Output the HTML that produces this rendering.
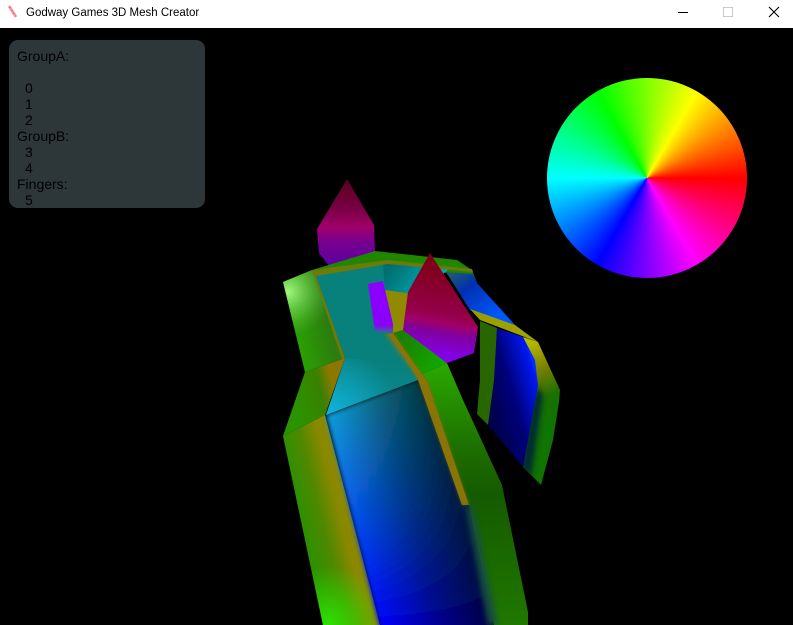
<!DOCTYPE html>
<html><head><meta charset="utf-8"><style>
html,body{margin:0;padding:0;background:#000;width:793px;height:625px;overflow:hidden}
#bar{position:absolute;left:0;top:0;width:793px;height:28px;background:#fff}
#title{position:absolute;left:26px;top:5px;font:11.5px/16px "Liberation Sans",sans-serif;color:#000;white-space:nowrap}
#wheel{position:absolute;left:547px;top:78px;width:200px;height:200px;border-radius:50%;background:conic-gradient(from 90deg,#f00,#f0f,#00f,#0ff,#0f0,#ff0,#f00)}
#panel{position:absolute;left:9px;top:40px;width:196px;height:168px;border-radius:9px;background:#2d3739;overflow:hidden;font:14px/16px "Liberation Sans",sans-serif;color:#000}
#panel div{position:absolute;white-space:nowrap}
svg{position:absolute;left:0;top:0}
</style></head><body>
<svg width="793" height="625" viewBox="0 0 793 625">
<defs>
<filter id="soft" x="-10%" y="-10%" width="120%" height="120%"><feGaussianBlur stdDeviation="2.5"/></filter>
<filter id="soft2" x="-30%" y="-10%" width="160%" height="120%"><feGaussianBlur stdDeviation="3"/></filter>
<filter id="soft3" x="-20%" y="-20%" width="140%" height="140%"><feGaussianBlur stdDeviation="1.5"/></filter>
<linearGradient id="cone1" gradientUnits="userSpaceOnUse" x1="347" y1="180" x2="347" y2="265"><stop offset="0" stop-color="#5a0020"/><stop offset=".3" stop-color="#740040"/><stop offset=".55" stop-color="#a00068"/><stop offset=".72" stop-color="#7a0090"/><stop offset="1" stop-color="#5a00a0"/></linearGradient>
<linearGradient id="cone2" gradientUnits="userSpaceOnUse" x1="440" y1="270" x2="425" y2="355"><stop offset="0" stop-color="#80001c"/><stop offset=".5" stop-color="#95004a"/><stop offset=".6" stop-color="#a00068"/><stop offset=".72" stop-color="#8000a0"/><stop offset="1" stop-color="#8400f0"/></linearGradient>
<linearGradient id="arm" gradientUnits="userSpaceOnUse" x1="287" y1="330" x2="345" y2="316"><stop offset="0" stop-color="#2aa800"/><stop offset=".7" stop-color="#2c7c10"/><stop offset="1" stop-color="#4a7a10"/></linearGradient>
<radialGradient id="armHi" gradientUnits="userSpaceOnUse" cx="288" cy="292" r="44"><stop offset="0" stop-color="#a0f880"/><stop offset="1" stop-color="#60c040" stop-opacity="0"/></radialGradient>
<linearGradient id="mid" gradientUnits="userSpaceOnUse" x1="295" y1="405" x2="335" y2="395"><stop offset="0" stop-color="#2a9400"/><stop offset=".7" stop-color="#3a8000"/><stop offset="1" stop-color="#8a7800"/></linearGradient>
<linearGradient id="low" gradientUnits="userSpaceOnUse" x1="288" y1="470" x2="346" y2="455"><stop offset="0" stop-color="#2c9000"/><stop offset=".35" stop-color="#508800"/><stop offset=".65" stop-color="#8a8800"/><stop offset="1" stop-color="#928800"/></linearGradient>
<radialGradient id="lowHi" gradientUnits="userSpaceOnUse" cx="328" cy="625" r="60"><stop offset="0" stop-color="#30e000"/><stop offset="1" stop-color="#30e000" stop-opacity="0"/></radialGradient>
<linearGradient id="teal" gradientUnits="userSpaceOnUse" x1="0" y1="275" x2="0" y2="415"><stop offset="0" stop-color="#08807c"/><stop offset=".6" stop-color="#08807c"/><stop offset="1" stop-color="#0a8894"/></linearGradient>
<radialGradient id="tealHi" gradientUnits="userSpaceOnUse" cx="328" cy="415" r="70"><stop offset="0" stop-color="#10b4dc"/><stop offset="1" stop-color="#10b4dc" stop-opacity="0"/></radialGradient>
<linearGradient id="base" gradientUnits="userSpaceOnUse" x1="0" y1="380" x2="0" y2="625"><stop offset="0" stop-color="#10c0e0"/><stop offset=".41" stop-color="#0870f0"/><stop offset="1" stop-color="#0000ff"/></linearGradient>
<linearGradient id="shade" gradientUnits="userSpaceOnUse" x1="340" y1="480" x2="470" y2="445"><stop offset="0" stop-color="#000" stop-opacity="0"/><stop offset=".45" stop-color="#000" stop-opacity=".45"/><stop offset=".8" stop-color="#000" stop-opacity=".72"/></linearGradient>
<linearGradient id="teal2" gradientUnits="userSpaceOnUse" x1="385" y1="268" x2="425" y2="298"><stop offset="0" stop-color="#006a6a"/><stop offset="1" stop-color="#00a8b8"/></linearGradient>
<linearGradient id="blue" gradientUnits="userSpaceOnUse" x1="452" y1="272" x2="490" y2="322"><stop offset="0" stop-color="#205a70"/><stop offset=".35" stop-color="#0030b0"/><stop offset="1" stop-color="#0058ff"/></linearGradient>
<linearGradient id="pblue" gradientUnits="userSpaceOnUse" x1="490" y1="400" x2="540" y2="385"><stop offset="0" stop-color="#000050"/><stop offset=".45" stop-color="#00007c"/><stop offset=".95" stop-color="#0018f0"/><stop offset="1" stop-color="#0030ff"/></linearGradient>
<linearGradient id="pgreen" gradientUnits="userSpaceOnUse" x1="525" y1="345" x2="556" y2="420"><stop offset="0" stop-color="#b8b800"/><stop offset=".35" stop-color="#788000"/><stop offset=".7" stop-color="#1a7000"/><stop offset="1" stop-color="#0f7400"/></linearGradient>
<linearGradient id="yel" gradientUnits="userSpaceOnUse" x1="470" y1="310" x2="538" y2="342"><stop offset="0" stop-color="#9a9a00"/><stop offset="1" stop-color="#a0a800"/></linearGradient>
<linearGradient id="fg" gradientUnits="userSpaceOnUse" x1="400" y1="340" x2="450" y2="370"><stop offset="0" stop-color="#1a8000"/><stop offset="1" stop-color="#10b000"/></linearGradient>
<linearGradient id="rg" gradientUnits="userSpaceOnUse" x1="0" y1="365" x2="0" y2="625"><stop offset="0" stop-color="#2aa800"/><stop offset=".35" stop-color="#1c6a00"/><stop offset=".5" stop-color="#155a00"/><stop offset="1" stop-color="#207800"/></linearGradient>
<linearGradient id="bar" gradientUnits="userSpaceOnUse" x1="0" y1="284" x2="0" y2="335"><stop offset="0" stop-color="#8c00ff"/><stop offset=".8" stop-color="#8a00f8"/><stop offset=".93" stop-color="#5050b0"/><stop offset="1" stop-color="#106868"/></linearGradient>
<clipPath id="pclip"><polygon points="523,337 538,342 560,390 559,402 553,440 541,485 523,467 537,385"/></clipPath>
</defs>

<!-- rear cone -->
<polygon points="347,179 374,225 375,252 329,266 319,253 317,229" fill="url(#cone1)"/>

<!-- right panel -->
<polygon points="480,321 497,328 495,380 488,425 477,414 480,380" fill="#286600"/>
<polygon points="523,337 538,342 560,390 559,402 553,440 541,485 523,467 537,385" fill="url(#pgreen)"/>
<g clip-path="url(#pclip)"><polygon points="536,385 543,395 531,478 520,467" fill="#002c30" filter="url(#soft2)"/></g>
<polygon points="497,328 523,337 535,360 538,385 523,467 488,425 494,380" fill="url(#pblue)"/>

<!-- top-back strip + blue arm -->
<polygon points="312,270 375,251 430,257 457,260 472,270 477,283 447,273 388,262 313,274" fill="#208600"/>
<polygon points="446,272 473,274 477,283 515,325 470,310" fill="url(#blue)"/>
<polygon points="470,309 515,325 538,342 480,320" fill="url(#yel)"/>

<!-- left body -->
<polygon points="283,436 325,415 380,625 323,625" fill="url(#low)"/>
<polygon points="283,436 325,415 380,625 323,625" fill="url(#lowHi)"/>
<polygon points="305,372 345,358 325,415 283,436" fill="url(#mid)"/>
<polygon points="283,282 312,270 345,358 305,372" fill="url(#arm)"/>
<polygon points="283,282 312,270 345,358 305,372" fill="url(#armHi)"/>

<!-- centre -->
<g filter="url(#soft)">
<polygon points="326,415 418,380 469,505 496,640 383,640" fill="url(#base)"/>
<polygon points="326,415 418,380 469,505 496,640 383,640" fill="url(#shade)"/>
</g>
<polygon points="314,272 388,261 450,268 412,295 393,333 418,380 326,415 345,358" fill="url(#teal)"/>
<polygon points="326,415 345,358 395,362 400,386" fill="url(#tealHi)"/>
<polygon points="383,263 450,268 425,290 412,295 385,290" fill="url(#teal2)"/>
<polygon points="312,270 388,260 472,269 473,272 388,264 316,276 345,358 342,359" fill="#6c7a08"/>

<!-- right strips -->
<polygon points="422,374 447,363 463,400 502,485 528,612 528,625 494,625 469,505 427,380" fill="url(#rg)"/>
<polygon points="393,333 403,329 447,363 422,374" fill="url(#fg)"/>
<polygon points="384,334 393,333 422,374 427,380 469,505 462,505 418,380 408,366" fill="#8a7a08" filter="url(#soft3)" opacity=".55"/>
<polygon points="388,334 393,333 422,374 427,380 469,505 462,505 418,380 410,366" fill="#8a7408"/>
<polygon points="466,506 473,506 498,625 488,625" fill="#145040" filter="url(#soft2)"/>

<!-- olive triangle, bar, front cone -->
<polygon points="385,290 412,294 403,330 393,333" fill="#8f8a00"/>
<polygon points="368,284 383,281 393,324 393,333 375,331" fill="url(#bar)"/>
<polygon points="430,253 478,327 474,353 447,363 403,330 408,292" fill="url(#cone2)"/>
</svg>

<div id="wheel"></div>
<div id="panel">
<div style="left:8px;top:8px">GroupA:</div>
<div style="left:16px;top:40px">0</div>
<div style="left:16px;top:56px">1</div>
<div style="left:16px;top:72px">2</div>
<div style="left:8px;top:88px">GroupB:</div>
<div style="left:16px;top:104px">3</div>
<div style="left:16px;top:120px">4</div>
<div style="left:8px;top:136px">Fingers:</div>
<div style="left:16px;top:152px">5</div>
</div>

<div id="bar"></div>
<svg width="793" height="28" viewBox="0 0 793 28">
<path d="M9 6 L16 17" stroke="#f4a0a8" stroke-width="3" fill="none"/>
<path d="M9.5 6.5 L15.5 16" stroke="#e85a64" stroke-width="1" stroke-dasharray="2 1.5" fill="none"/>
<rect x="678" y="12" width="10" height="1" fill="#000"/>
<rect x="723.5" y="7.5" width="9" height="9" fill="none" stroke="#ccc"/>
<path d="M769 7 L779 17 M779 7 L769 17" stroke="#000" stroke-width="1.1" fill="none"/>
</svg>
<div id="title">Godway Games 3D Mesh Creator</div>
</body></html>
